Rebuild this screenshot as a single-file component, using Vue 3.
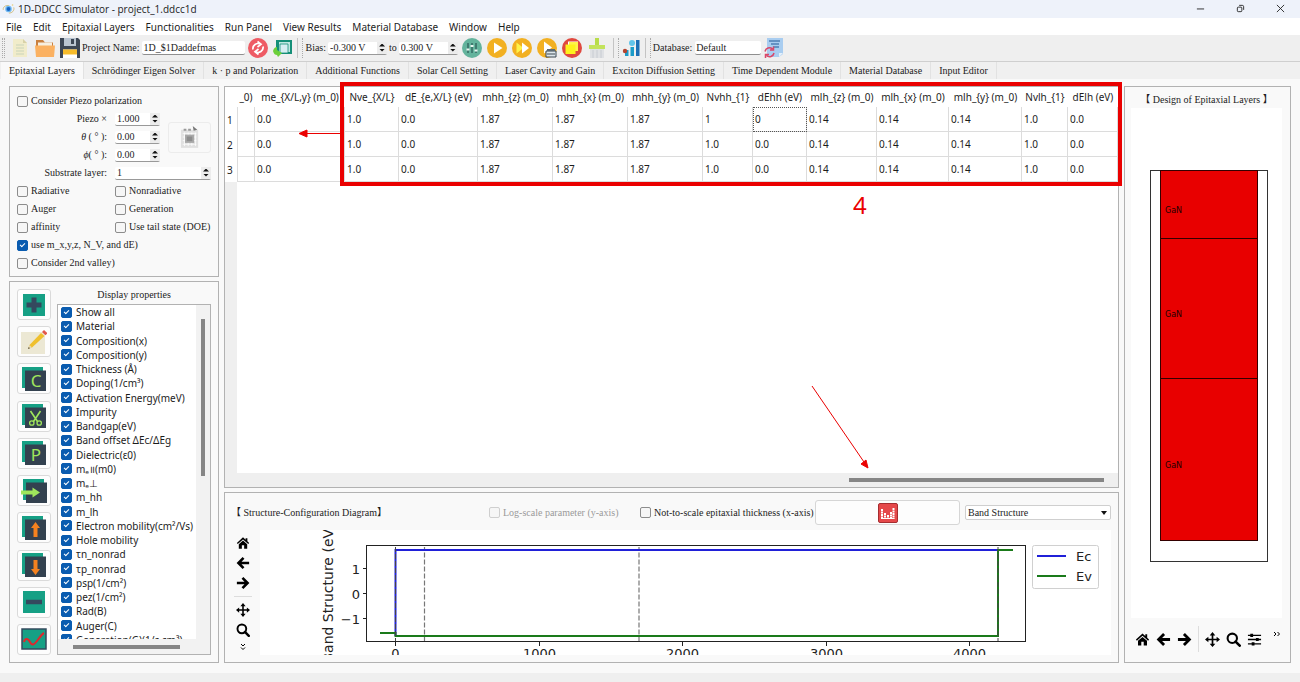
<script setup>
import { ref } from 'vue'

const menus = ['File', 'Edit', 'Epitaxial Layers', 'Functionalities', 'Run Panel', 'View Results', 'Material Database', 'Window', 'Help']
const tabs = [
  'Epitaxial Layers', 'Schrödinger Eigen Solver', 'k · p and Polarization', 'Additional Functions', 'Solar Cell Setting',
  'Laser Cavity and Gain', 'Exciton Diffusion Setting', 'Time Dependent Module', 'Material Database', 'Input Editor',
]
const activeTab = ref(0)

const projectName = ref('1D_$1Daddefmas')
const biasFrom = ref('-0.300 V')
const biasTo = ref('0.300 V')
const database = ref('Default')

const piezo = ref(false)
const angles = ref([
  { id: 'piezo-x', sym: '', label: 'Piezo ×', value: '1.000' },
  { id: 'theta', sym: 'θ', label: ' ( ° ):', value: '0.00' },
  { id: 'phi', sym: 'ϕ', label: '( ° ):', value: '0.00' },
])
const substrate = ref('1')
const options = ref([
  { label: 'Radiative', on: false },
  { label: 'Nonradiative', on: false },
  { label: 'Auger', on: false },
  { label: 'Generation', on: false },
  { label: 'affinity', on: false },
  { label: 'Use tail state (DOE)', on: false },
  { label: 'use m_x,y,z, N_V, and dE)', on: true, wide: true },
  { label: 'Consider 2nd valley)', on: false, wide: true },
])

const layerTools = [
  { icon: 'add', label: 'Add layer' },
  { icon: 'edit', label: 'Edit layer' },
  { icon: 'pages', letter: 'C', label: 'Copy layer' },
  { icon: 'cut', label: 'Cut layer' },
  { icon: 'pages', letter: 'P', label: 'Paste layer' },
  { icon: 'insert', label: 'Insert layer' },
  { icon: 'up', label: 'Move up' },
  { icon: 'down', label: 'Move down' },
  { icon: 'remove', label: 'Remove layer' },
  { icon: 'curve', label: 'Plot curve' },
]

const properties = ref([
  'Show all', 'Material', 'Composition(x)', 'Composition(y)', 'Thickness (Å)', 'Doping(1/cm³)', 'Activation Energy(meV)',
  'Impurity', 'Bandgap(eV)', 'Band offset ΔEc/ΔEg', 'Dielectric(ε0)', 'mₑ॥(m0)', 'mₑ⊥', 'm_hh', 'm_lh',
  'Electron mobility(cm²/Vs)', 'Hole mobility', 'τn_nonrad', 'τp_nonrad', 'psp(1/cm²)', 'pez(1/cm²)', 'Rad(B)',
  'Auger(C)', 'Generation(G)(1/s cm³)',
].map((label) => ({ label, on: true })))

const columns = [
  { name: '_0)', width: 18, cells: ['', '', ''] },
  { name: 'me_{X/L,y} (m_0)', width: 90, cells: ['0.0', '0.0', '0.0'] },
  { name: 'Nve_{X/L}', width: 54, cells: ['1.0', '1.0', '1.0'] },
  { name: 'dE_{e,X/L} (eV)', width: 79, cells: ['0.0', '0.0', '0.0'] },
  { name: 'mhh_{z} (m_0)', width: 75, cells: ['1.87', '1.87', '1.87'] },
  { name: 'mhh_{x} (m_0)', width: 75, cells: ['1.87', '1.87', '1.87'] },
  { name: 'mhh_{y} (m_0)', width: 75, cells: ['1.87', '1.87', '1.87'] },
  { name: 'Nvhh_{1}', width: 50, cells: ['1', '1.0', '1.0'] },
  { name: 'dEhh (eV)', width: 54, cells: ['0', '0.0', '0.0'] },
  { name: 'mlh_{z} (m_0)', width: 70, cells: ['0.14', '0.14', '0.14'] },
  { name: 'mlh_{x} (m_0)', width: 72, cells: ['0.14', '0.14', '0.14'] },
  { name: 'mlh_{y} (m_0)', width: 73, cells: ['0.14', '0.14', '0.14'] },
  { name: 'Nvlh_{1}', width: 46, cells: ['1.0', '1.0', '1.0'] },
  { name: 'dElh (eV)', width: 50, cells: ['0.0', '0.0', '0.0'] },
]
const totalWidth = columns.reduce((sum, c) => sum + c.width, 12)
const share = (w) => ({ width: `${(w / totalWidth) * 100}%` })

const logScale = ref(false)
const notToScale = ref(false)
const diagram = ref('Band Structure')
const xTicks = [0, 1000, 2000, 3000, 4000].map((v) => ({ v, x: Math.round(135 + v * 0.1435) + 0.5 }))
const yTicks = [{ t: '1', y: 38.5 }, { t: '0', y: 63.5 }, { t: '−1', y: 88.5 }]
</script>

<template>
  <div class="window">
    <svg class="sprite" aria-hidden="true">
      <symbol id="home" viewBox="0 0 16 16">
        <path d="M8 1.500 1 8l1 1.200L8 4l6 5.200L15 8l-2-1.900V2.500h-2v1.800z" />
        <path d="M8 5.200 3.200 9.400V14.500H6.700V10.500h2.600v4h3.500V9.400z" />
      </symbol>
      <symbol id="back" viewBox="0 0 16 16">
        <path d="M8.600 2.200 2.800 8l5.800 5.800M3.400 8H15" fill="none" stroke="#000" stroke-width="3" />
      </symbol>
      <symbol id="forward" viewBox="0 0 16 16">
        <path d="M7.400 2.200 13.200 8l-5.800 5.800M12.600 8H1" fill="none" stroke="#000" stroke-width="3" />
      </symbol>
      <symbol id="pan" viewBox="0 0 16 16">
        <path d="M8 2v12M2 8h12" stroke="#000" stroke-width="1.800" />
        <path d="M8 0 5 3.600h6zM8 16l-3-3.600h6zM0 8l3.600-3v6zM16 8l-3.600-3v6z" />
      </symbol>
      <symbol id="lens" viewBox="0 0 16 16">
        <circle cx="6.700" cy="6.700" r="5" fill="none" stroke="#000" stroke-width="2.200" />
        <path d="m10.200 10.200 4.400 4.400" stroke="#000" stroke-width="2.800" stroke-linecap="round" />
      </symbol>
      <symbol id="sliders" viewBox="0 0 16 16">
        <path d="M1 3.500h14M1 8h14M1 12.700h14" stroke="#000" stroke-width="1.400" />
        <path d="M3.500 1.800h3v3.400h-3zM9.500 6.300h3v3.400h-3zM5 11h3v3.400H5z" />
      </symbol>
      <symbol id="add" viewBox="0 0 24 24">
        <path d="M1 1h22v22H1z" fill="#16a085" /><path d="M12 4.500v15M4.500 12h15" stroke="#34495e" stroke-width="5" />
      </symbol>
      <symbol id="remove" viewBox="0 0 24 24">
        <path d="M1 1h22v22H1z" fill="#16a085" /><path d="M4 12h16" stroke="#34495e" stroke-width="4.500" />
      </symbol>
      <symbol id="edit" viewBox="0 0 26 24">
        <path d="M0 2h24v22H0z" fill="#ece8d4" />
        <path d="m7 19 1.500-4L20 3l3.500 3L11 17.500z" fill="#efc02e" /><path d="m7 19 1.500-4 2.500 2.500z" fill="#e8d9b0" />
        <path d="M7 19l.8-1.900 1.100 1.100z" fill="#444" /><path d="m21 2 2-2 3.500 3.300-2 2z" fill="#e2574c" />
      </symbol>
      <symbol id="pages" viewBox="0 0 24 24">
        <path d="M0 0h21v21H0z" fill="#16a085" /><path d="M3 3.500h21V24H3z" fill="#33414f" />
      </symbol>
      <symbol id="cut" viewBox="0 0 24 24">
        <use href="#pages" width="24" height="24" />
        <path d="m8.500 7 7 10.500M18.500 7l-7 10.500" stroke="#a0e65c" stroke-width="1.600" />
        <circle cx="9.800" cy="19" r="2.200" fill="none" stroke="#a0e65c" stroke-width="1.300" />
        <circle cx="17.200" cy="19" r="2.200" fill="none" stroke="#a0e65c" stroke-width="1.300" />
      </symbol>
      <symbol id="insert" viewBox="-2 0 26 24">
        <use href="#pages" width="24" height="24" /><path d="M-2 11.500h11.500V8.500l7.500 5-7.500 5v-3H-2z" fill="#a0e65c" />
      </symbol>
      <symbol id="up" viewBox="0 0 24 24">
        <use href="#pages" width="24" height="24" /><path d="m13.500 6 4.500 6h-2.500v9h-4v-9H9z" fill="#f5821f" />
      </symbol>
      <symbol id="down" viewBox="0 0 24 24">
        <use href="#pages" width="24" height="24" /><path d="m13.500 22 4.500-6h-2.500V7h-4v9H9z" fill="#f5821f" />
      </symbol>
      <symbol id="curve" viewBox="0 0 26 24">
        <path d="M1 2h24v20H1z" fill="#16a085" stroke="#34495e" stroke-width="1.500" />
        <path d="M3 15c1-4 4-4 6 0s4 3 7-1 5-7 7-8" fill="none" stroke="#e0262c" stroke-width="2" />
      </symbol>
    </svg>

    <header class="titlebar">
      <svg class="appicon" viewBox="0 0 16 16" aria-hidden="true">
        <path d="M1.500 9C1 5 5 3 9 4M14.500 6c1 4-2 7-6 7" fill="none" stroke="#c9b36a" stroke-width="1" />
        <circle cx="8" cy="8" r="4" fill="#6fb7f0" /><circle cx="8" cy="8" r="2.400" fill="#1463c4" />
        <circle cx="13" cy="3" r="1" fill="#e8cf7a" />
      </svg>
      <h1>1D-DDCC Simulator - project_1.ddcc1d</h1>
      <div class="winbuttons">
        <button aria-label="Minimize"><svg viewBox="0 0 10 10"><path d="M1 5.500h8" /></svg></button>
        <button aria-label="Restore"><svg viewBox="0 0 10 10"><rect x="1.500" y="3.500" width="5" height="5" rx="1" /><path d="M3.500 1.500h3.500q1.500 0 1.500 1.500v3.500" /></svg></button>
        <button aria-label="Close"><svg viewBox="0 0 10 10"><path d="m1 1 8 8M9 1 1 9" /></svg></button>
      </div>
    </header>

    <nav class="menubar">
      <button v-for="m in menus" :key="m">{{ m }}</button>
    </nav>

    <div class="toolbar">
      <i class="grip"></i>
      <button class="tb" aria-label="New">
        <svg viewBox="0 0 20 20"><path d="M3 1h10l4 4v14H3z" fill="#f1ecca" /><path d="M13 1v4h4z" fill="#d8d2a8" /><path d="M6 7h8M6 10h8M6 13h8M6 16h8" stroke="#d6dcc0" stroke-width="1.300" /></svg>
      </button>
      <button class="tb" aria-label="Open">
        <svg viewBox="0 0 20 20"><path d="M1 2h7l2 2.500h8V9H1z" fill="#c9803f" /><path d="M3 4.500h14V9H3z" fill="#f7efe0" /><path d="M0 7.500h20L19 19H1z" fill="#fbb161" /></svg>
      </button>
      <button class="tb" aria-label="Save">
        <svg viewBox="0 0 20 20"><path d="M0 0h18l2 2v18H0z" fill="#3c4654" /><path d="M4 0h12v8H4z" fill="#b9c4d0" /><path d="M11 1h3v5h-3z" fill="#3c4654" /><path d="M3 11.500h14V20H3z" fill="#fff" /><path d="M3 11.500h14v5H3z" fill="#f6bb2a" /></svg>
      </button>
      <label for="project">Project Name:</label>
      <input id="project" v-model="projectName" class="line project" type="text">
      <button class="tb" aria-label="Refresh project">
        <svg viewBox="0 0 20 20"><circle cx="10" cy="10" r="10" fill="#ee5b64" /><path d="M5 11.500a5 5 0 0 1 7.500-5.200M15 8.500a5 5 0 0 1-7.500 5.200M9.500 3.500l3.500 2.800-3.500 2.700M10.500 16.500 7 13.700l3.500-2.700" fill="none" stroke="#fff" stroke-width="1.700" /></svg>
      </button>
      <button class="tb" aria-label="Reload structure">
        <svg viewBox="0 0 20 20"><path d="M3 2h16v14H3z" fill="#158f78" /><path d="M6 4h11v10H6z" fill="#bfe6e0" /><path d="M7 6h8v9H7z" fill="#d7eef2" stroke="#158f78" stroke-width=".8" /><path d="M0 13c1-3 2-4 4-4v3l5 3-4 4-1-2c-2 0-3-1-4-4z" fill="#6ccf3a" /></svg>
      </button>
      <i class="grip sep"></i>
      <label for="bias-from">Bias:</label>
      <span class="spin bias"><input id="bias-from" v-model="biasFrom" type="text"><span class="steps"><button aria-label="Raise start bias"></button><button aria-label="Lower start bias"></button></span></span>
      <label for="bias-to">to</label>
      <span class="spin bias"><input id="bias-to" v-model="biasTo" type="text"><span class="steps"><button aria-label="Raise end bias"></button><button aria-label="Lower end bias"></button></span></span>
      <div class="runs">
        <button class="tb" aria-label="Parameters">
          <svg viewBox="0 0 20 20"><circle cx="10" cy="10" r="10" fill="#63b39c" /><path d="M6 5v10M10 5v10M14 5v10" stroke="#2f5f5a" stroke-width="1.300" /><path d="M4.500 11.500h3M8.500 8h3M12.500 12.500h3" stroke="#e8f5ef" stroke-width="2" /></svg>
        </button>
        <button class="tb" aria-label="Run">
          <svg viewBox="0 0 20 20"><circle cx="10" cy="10" r="10" fill="#f2b021" /><path d="m7 4.500 8.500 5.500L7 15.500z" fill="#fff" /></svg>
        </button>
        <button class="tb" aria-label="Run all">
          <svg viewBox="0 0 20 20"><circle cx="10" cy="10" r="10" fill="#f2b021" /><path d="m4.500 4.500 7 5.500-7 5.500z" fill="#fff34a" /><path d="m10 4.500 7 5.500-7 5.500z" fill="#fff" /></svg>
        </button>
        <button class="tb" aria-label="Run queue">
          <svg viewBox="0 0 20 20"><circle cx="10" cy="10" r="10" fill="#f2b021" /><path d="m7 3.500 8 6-8 6z" fill="#fff" /><path d="M9 13h10v6H9z" fill="#dce6ea" stroke="#3b4650" /><path d="M10 11h8v2h-8z" fill="#5d6b74" /><path d="M10 16h8" stroke="#3b4650" /></svg>
        </button>
        <button class="tb" aria-label="Stop">
          <svg viewBox="0 0 20 20"><circle cx="10" cy="10" r="10" fill="#e0483e" /><path d="M6 3.500h10V13H6z" fill="#fff" /><path d="M7 4h9v9H7z" fill="#fff34a" /><path d="M3.500 6.500h10V16h-10z" fill="#fdf21c" /></svg>
        </button>
        <button class="tb" aria-label="Clean">
          <svg viewBox="0 0 20 20"><path d="M8 0h4v7H8z" fill="#b8dc4a" /><path d="M2 7h16v4H2z" fill="#c3e35c" /><path d="M3 11h14v9H3z" fill="#dfe1e4" /><path d="M6 12v8M10 12v8M14 12v8" stroke="#c8ccd2" /></svg>
        </button>
      </div>
      <i class="grip sep"></i>
      <button class="tb" aria-label="Charts">
        <svg viewBox="0 0 20 20"><path d="M4 12h3.500v6H4zM9.500 9H13v9H9.500z" fill="#1a9bc9" /><path d="M15 2h3.500v16H15z" fill="#1d6fb5" /><circle cx="11" cy="5" r="3" fill="#62c4ea" /><circle cx="4" cy="13" r="2.200" fill="#b5442f" /></svg>
      </button>
      <i class="grip sep"></i>
      <label for="database">Database:</label>
      <input id="database" v-model="database" class="line database" type="text">
      <button class="tb" aria-label="Reload database">
        <svg viewBox="0 0 20 20"><path d="M3 0h16v16l-4 3H3z" fill="#a9cdf0" /><path d="M19 15h-4v4z" fill="#e4f0fb" /><path d="M5 3h11M7 6h8M9 9h6" stroke="#4e7fb4" stroke-width="1.500" /><path d="M1 13.500a4.500 4.500 0 0 1 7.500-2.500M10 15a4.500 4.500 0 0 1-7.500 2.500M9.500 8.500V12H6M1.500 20v-3.500H5" fill="none" stroke="#d9486a" stroke-width="1.500" /></svg>
      </button>
    </div>

    <div class="tabs" role="tablist">
      <button v-for="(t, i) in tabs" :key="t" role="tab" :aria-selected="i === activeTab" :class="{ active: i === activeTab }" @click="activeTab = i">{{ t }}</button>
    </div>

    <main class="page">
      <div class="left">
        <section class="panel settings">
          <label class="check row"><input v-model="piezo" type="checkbox">Consider Piezo polarization</label>
          <div class="fields">
            <template v-for="a in angles" :key="a.id">
              <label class="fl" :for="a.id"><i v-if="a.sym">{{ a.sym }}</i>{{ a.label }}</label>
              <span class="spin"><input :id="a.id" v-model="a.value" type="text"><span class="steps"><button aria-label="Increase"></button><button aria-label="Decrease"></button></span></span>
            </template>
            <button class="calendar" aria-label="Piezo table" disabled>
              <svg viewBox="0 0 22 26"><path d="M1 5h19v20H1z" fill="#e0e0e0" /><path d="M3 9h15M3 13h15M3 17h15M3 21h15M5 8v15M9 8v15M13 8v15M17 8v15" stroke="#fff" stroke-width=".8" /><path d="M5.500 10.500h10v9h-10z" fill="#a8a8a8" /><path d="M7.500 12.500h6v5h-6z" fill="#8c8c8c" /><path d="M4 5h3M9 5h3" stroke="#999" stroke-width="2" /><path d="m14 1 5 4-4 1z" fill="#777" /></svg>
            </button>
            <label class="fl" for="substrate">Substrate layer:</label>
            <span class="spin full"><input id="substrate" v-model="substrate" type="text"><span class="steps"><button aria-label="Next layer"></button><button aria-label="Previous layer"></button></span></span>
          </div>
          <div class="options">
            <label v-for="o in options" :key="o.label" class="check row" :class="{ wide: o.wide }"><input v-model="o.on" type="checkbox">{{ o.label }}</label>
          </div>
        </section>

        <section class="panel display">
          <div class="tools">
            <button v-for="t in layerTools" :key="t.label" :aria-label="t.label">
              <svg viewBox="0 0 26 24"><use :href="'#' + t.icon" /><text v-if="t.letter" x="15" y="20" text-anchor="middle">{{ t.letter }}</text></svg>
            </button>
          </div>
          <div class="props">
            <h2>Display properties</h2>
            <div class="listbox">
              <div class="clip">
                <ul>
                  <li v-for="p in properties" :key="p.label"><label class="check"><input v-model="p.on" type="checkbox">{{ p.label }}</label></li>
                </ul>
              </div>
              <div class="vbar"><i></i></div>
              <div class="hbar"><i></i></div>
            </div>
          </div>
        </section>
      </div>

      <div class="middle">
        <section class="panel grid">
          <div class="sheet">
            <table>
              <colgroup>
                <col :style="share(12)">
                <col v-for="c in columns" :key="c.name" :style="share(c.width)">
              </colgroup>
              <thead>
                <tr><th></th><th v-for="c in columns" :key="c.name" scope="col">{{ c.name }}</th></tr>
              </thead>
              <tbody>
                <tr v-for="r in 3" :key="r">
                  <th scope="row">{{ r }}</th>
                  <td v-for="(c, i) in columns" :key="c.name" :class="{ focus: r === 1 && i === 8 }">{{ c.cells[r - 1] }}</td>
                </tr>
              </tbody>
            </table>
            <div class="gutter"></div>
          </div>
          <div class="sheetbar"><i></i></div>
          <div class="highlight"></div>
          <svg class="marks" viewBox="0 0 895 401" aria-hidden="true">
            <path d="M116 47.500H82" /><path class="head" d="m75 47.500 8-3.500v7z" />
            <path d="m588 300 52 76" /><path class="head" d="m644 382-7-4 5-4z" />
          </svg>
          <span class="step">4</span>
        </section>

        <section class="panel diagram">
          <div class="dhead">
            <h2>【 Structure-Configuration Diagram】</h2>
            <label class="check off"><input v-model="logScale" type="checkbox" disabled>Log-scale parameter (y-axis)</label>
            <label class="check"><input v-model="notToScale" type="checkbox">Not-to-scale epitaxial thickness (x-axis)</label>
            <button class="plotbtn" aria-label="Plot">
              <svg viewBox="0 0 20 20"><rect x=".5" y=".5" width="19" height="19" rx="1.500" fill="#e5484a" stroke="#a52d30" /><path d="M4 6v9.500M7 10v5.500M10 12v3.500M13 9v6.500M15.500 5v10.500" stroke="#fff" stroke-width="2" stroke-dasharray="2 .5" /><path d="M3 15.500h13.500" stroke="#fff" /></svg>
            </button>
            <span class="combo"><select v-model="diagram" aria-label="Diagram"><option>Band Structure</option></select></span>
          </div>
          <div class="dbody">
            <div class="vtools">
              <button aria-label="Home"><svg><use href="#home" /></svg></button>
              <button aria-label="Back"><svg><use href="#back" /></svg></button>
              <button aria-label="Forward"><svg><use href="#forward" /></svg></button>
              <hr>
              <button aria-label="Pan"><svg><use href="#pan" /></svg></button>
              <button aria-label="Zoom"><svg><use href="#lens" /></svg></button>
              <button class="more" aria-label="More"><svg viewBox="0 0 6 8"><path d="m1 1 2 2 2-2M1 4.500l2 2 2-2" fill="none" stroke="#000" /></svg></button>
            </div>
            <svg class="plot" viewBox="0 0 851 125" preserveAspectRatio="xMinYMin slice">
              <g stroke="#777" stroke-width="1.200" stroke-dasharray="5 2">
                <path d="M164.500 111.500V17M379 111.500V17" />
              </g>
              <path d="M135.500 106V20H738" fill="none" stroke="#2020d8" stroke-width="2" />
              <path d="M120 103h15.500V106H738V20h15" fill="none" stroke="#1a7a1a" stroke-width="2" />
              <path d="M135.500 17v94M738 17v94" stroke="#444" stroke-dasharray="5 2" />
              <rect x="106.500" y="15.500" width="659" height="96" fill="none" stroke="#222" />
              <g v-for="t in xTicks" :key="t.v"><path :d="`M${t.x} 112v4`" stroke="#222" /><text :x="t.x" y="128" text-anchor="middle">{{ t.v }}</text></g>
              <g v-for="t in yTicks" :key="t.t"><path :d="`M103 ${t.y}h3`" stroke="#222" /><text x="100" :y="t.y + 5" text-anchor="end">{{ t.t }}</text></g>
              <text class="axis" transform="translate(73 63) rotate(-90)" text-anchor="middle">Band Structure (eV)</text>
              <rect x="772.500" y="15.500" width="66" height="43" rx="2" fill="#fff" stroke="#d0d0d0" />
              <path d="M777 26h29" stroke="#2020d8" stroke-width="2" /><path d="M777 46h29" stroke="#1a7a1a" stroke-width="2" />
              <text x="816" y="31">Ec</text><text x="816" y="51">Ev</text>
            </svg>
          </div>
        </section>
      </div>

      <section class="panel design">
        <h2>【 Design of Epitaxial Layers 】</h2>
        <svg class="stack" viewBox="0 0 151 510" preserveAspectRatio="xMidYMin meet">
          <rect x="19.500" y="62.500" width="117" height="391" fill="none" stroke="#333" />
          <g fill="#e80000" stroke="#300">
            <rect x="29.500" y="62.500" width="97" height="68" /><rect x="29.500" y="130.500" width="97" height="140" /><rect x="29.500" y="270.500" width="97" height="162" />
          </g>
          <text x="34" y="105">GaN</text><text x="34" y="209">GaN</text><text x="34" y="360">GaN</text>
        </svg>
        <div class="htools">
          <button aria-label="Home"><svg><use href="#home" /></svg></button>
          <button aria-label="Back"><svg><use href="#back" /></svg></button>
          <button aria-label="Forward"><svg><use href="#forward" /></svg></button>
          <i></i>
          <button aria-label="Pan"><svg><use href="#pan" /></svg></button>
          <button aria-label="Zoom"><svg><use href="#lens" /></svg></button>
          <button aria-label="Configure"><svg><use href="#sliders" /></svg></button>
          <button class="more" aria-label="More"><svg viewBox="0 0 8 6"><path d="m1 1 2 2-2 2M4.500 1l2 2-2 2" fill="none" stroke="#000" /></svg></button>
        </div>
      </section>
    </main>

    <footer class="status"></footer>
  </div>
</template>

<style>
html, body { background: #efefef; }
</style>

<style scoped>
.window { display: flex; flex-direction: column; min-height: 100vh; overflow: hidden; color: #1c1c1c; font: 10px/14px "Liberation Serif", "Noto Sans CJK TC", serif; }
.window *, .window *::before, .window *::after { box-sizing: border-box; }
button { padding: 0; border: 0; background: none; color: inherit; font: inherit; }
input, select { min-width: 0; margin: 0; color: inherit; font: inherit; }
h1, h2 { margin: 0; font: inherit; }
.sprite { position: absolute; width: 0; height: 0; }

.titlebar { display: flex; align-items: center; height: 18px; padding-left: 2px; background: #eef2fa; font: 10px/14px "Open Sans", "Noto Sans", sans-serif; }
.titlebar h1 { flex: 1; }
.appicon { width: 13px; height: 14px; margin-right: 3px; }
.winbuttons { display: flex; }
.winbuttons button { width: 40px; height: 16px; }
.winbuttons svg { width: 9px; height: 9px; fill: none; stroke: #222; }

.menubar { display: flex; gap: 11px; align-items: center; height: 17px; padding-left: 6px; background: #fff; font: 10px/14px "Noto Sans", sans-serif; }

.toolbar { display: flex; align-items: center; height: 27px; padding-left: 2px; background: #efefef; border-bottom: 1px solid #cfcfcf; }
.grip { width: 3px; height: 20px; margin-right: 5px; border-left: 1px dotted #aaa; border-right: 1px dotted #aaa; }
.grip.sep { width: 6px; margin-left: 4px; margin-right: 2px; border-left: 1px solid #c4c4c4; }
.tb { display: flex; width: 20px; height: 20px; margin-right: 5px; }
.tb svg { width: 100%; height: 100%; }
.tb:has(+ label) { margin-right: 2px; }
.tb:has(+ .grip) { margin-right: 0; }
.line { height: 14px; padding: 0 1px; border: 0; border-bottom: 1px solid #8f8f8f; border-radius: 2px; background: #fff; }
.project { width: 103px; margin: 0 3px; }
.database { width: 66px; margin: 0 3px; }
.runs { display: flex; gap: 5px; margin: 0 2px; }
.runs .tb { margin: 0; }

.spin { display: flex; height: 13px; border-bottom: 1px solid #999; border-radius: 2px; background: #fff; }
.spin input { flex: 1; width: 100%; padding: 0 2px; border: 0; background: none; }
.spin.bias { width: 59px; margin: 0 2px; }
.steps { display: flex; flex-direction: column; justify-content: center; gap: 2px; width: 10px; align-items: center; background: #ececec; }
.steps button { width: 6px; height: 3px; background: #111; clip-path: polygon(50% 0, 100% 100%, 0 100%); }
.steps button + button { clip-path: polygon(0 0, 100% 0, 50% 100%); }

.tabs { display: flex; height: 17px; padding-left: 1px; background: #f0f0f0; }
.tabs button { padding: 0 8px; border-right: 1px solid #e2e2e2; white-space: nowrap; }
.tabs button.active { background: #f9f9f9; }

.page { flex: 1; display: grid; grid-template-columns: 210px minmax(0, 1fr) 167px; gap: 5px; padding: 7px 9px 10px 9px; background: #f9f9f9; }
.panel { border: 1px solid #b2b2b2; }
.left, .middle { display: flex; flex-direction: column; gap: 4px; }

.check { display: flex; align-items: center; gap: 3px; white-space: nowrap; }
.check input { appearance: none; flex: none; position: relative; width: 11px; height: 11px; border: 1px solid #8c8c8c; border-radius: 2px; background: #f6f6f6; }
.check input:checked { border-color: #0a5cb0; background: #0a5cb0; }
.check input:checked::after { content: ""; position: absolute; left: 2px; top: 2px; width: 5px; height: 3px; border-left: 1px solid #fff; border-bottom: 1px solid #fff; transform: rotate(-45deg); }
.check.off { color: #9a9a9a; }
.check.off input { border-color: #cfcfcf; }
.row { height: 18px; }

.settings { padding: 5px 7px 4px; }
.fields { display: grid; grid-template-columns: 90px 45px 1fr; grid-auto-rows: 18px; column-gap: 8px; align-items: center; }
.fl { grid-column: 1; text-align: right; }
.spin.full { grid-column: 2 / 4; }
.calendar { grid-area: 1 / 3 / 4 / 4; display: flex; align-items: center; justify-content: center; height: 31px; border: 1px solid #ececec; border-radius: 3px; }
.calendar svg { width: 20px; height: 26px; }
.options { display: grid; grid-template-columns: 98px 1fr; }
.wide { grid-column: 1 / 3; }

.display { flex: 1; display: grid; grid-template-columns: 34px 1fr; gap: 6px; padding: 7px; min-height: 0; }
.tools { display: flex; flex-direction: column; justify-content: space-between; }
.tools button { display: flex; align-items: center; justify-content: center; height: 31px; border: 1px solid #dadada; border-radius: 3px; background: #fdfdfd; }
.tools svg { width: 26px; height: 24px; }
.tools text { fill: #a0e65c; font: 17px "Noto Sans", sans-serif; }
.props { display: flex; flex-direction: column; }
.props h2 { height: 15px; line-height: 11px; text-align: center; }
.listbox { flex: 1; display: grid; grid-template-columns: 1fr 14px; grid-template-rows: 1fr 14px; border: 1px solid #b2b2b2; background: #f2f2f2; }
.clip { height: 334px; overflow: hidden; background: #fff; }
.listbox ul { display: grid; grid-auto-rows: 1fr; height: 342px; margin: 0; padding: 0 0 0 3px; list-style: none; font: 10px/14px "Noto Sans", "DejaVu Sans", sans-serif; }
.listbox .check { gap: 4px; }
.vbar { padding: 14px 5px 0; }
.vbar i { display: block; width: 4px; height: 157px; background: #868686; }
.hbar { grid-column: 1 / 3; padding: 5px 15px; }
.hbar i { display: block; width: 107px; height: 4px; background: #868686; }

.grid { flex: 1; position: relative; display: flex; flex-direction: column; }
.sheet { flex: 1; display: flex; flex-direction: column; background: #fff; }
table { width: 100%; table-layout: fixed; border-collapse: separate; border-spacing: 0; font: 10px/14px "Noto Sans", sans-serif; }
th { height: 20px; padding: 0; font-weight: 400; white-space: nowrap; overflow: hidden; }
tbody th, td { height: 25px; }
tbody th { text-align: left; padding-left: 2px; }
td { padding: 0 0 0 2px; border-right: 1px solid #dcdcdc; border-bottom: 1px solid #dcdcdc; }
tbody th + td { border-left: 1px solid #dcdcdc; }
td.focus { outline: 1px dotted #555; outline-offset: -1px; }
.gutter { flex: 1; width: 12px; background: #efefef; }
.sheetbar { display: flex; justify-content: flex-end; height: 14px; padding: 5px 14px; background: #efefef; }
.sheetbar i { width: 255px; height: 4px; background: #868686; }
.highlight { position: absolute; left: 115px; right: -4px; top: -5px; height: 104px; border: 4px solid #ea0000; }
.marks { position: absolute; left: -1px; top: -1px; width: 895px; height: 401px; stroke: #ea0000; fill: none; }
.marks .head { fill: #ea0000; }
.step { position: absolute; left: 628px; top: 104px; color: #ea0000; font: 24px/28px "Noto Sans", sans-serif; }

.diagram { padding: 7px 7px 7px 6px; }
.dhead { display: grid; grid-template-columns: 258fr 151fr 175fr 145fr 151fr; align-items: center; height: 25px; }
.plotbtn { display: flex; align-items: center; justify-content: center; height: 25px; border: 1px solid #d6d6d6; border-radius: 3px; background: #fdfdfd; }
.plotbtn svg { width: 20px; height: 20px; }
.combo { position: relative; display: flex; margin-left: 5px; }
.combo::after { content: ""; position: absolute; right: 4px; top: 6px; width: 6px; height: 4px; background: #111; clip-path: polygon(0 0, 100% 0, 50% 100%); pointer-events: none; }
select { appearance: none; flex: 1; height: 15px; padding: 0 2px; border: 1px solid #cfcfcf; border-radius: 2px; background: #fff; }
.dbody { display: flex; gap: 9px; padding: 5px 0 0 4px; }
.vtools { display: flex; flex-direction: column; align-items: center; width: 16px; padding-top: 6px; gap: 6px; }
.vtools button, .htools button { display: flex; width: 14px; height: 14px; }
.vtools svg, .htools svg { width: 100%; height: 100%; }
.vtools hr { width: 18px; height: 1px; margin: 0; border: 0; background: #ddd; }
.vtools .more { width: 6px; height: 8px; }
.plot { flex: 1; min-width: 0; height: 125px; background: #fff; }
.plot text, .stack text { fill: #222; font: 13px "DejaVu Sans", sans-serif; }
.plot .axis { font-size: 14px; }

.design { display: flex; flex-direction: column; padding: 5px 8px 10px 6px; }
.design h2 { height: 16px; line-height: 16px; text-align: center; white-space: nowrap; }
.stack { flex: 1; width: 100%; min-height: 0; background: #fff; }
.stack text { fill: #200; font-size: 8px; }
.htools { display: flex; align-items: center; gap: 6px; height: 34px; padding: 8px 1px 0 4px; }
.htools button { width: 15px; height: 15px; }
.htools i { width: 1px; height: 26px; background: #ddd; }
.htools .more { width: 8px; height: 6px; margin: 0 0 10px auto; }

.status { height: 10px; background: #efefef; }
</style>
